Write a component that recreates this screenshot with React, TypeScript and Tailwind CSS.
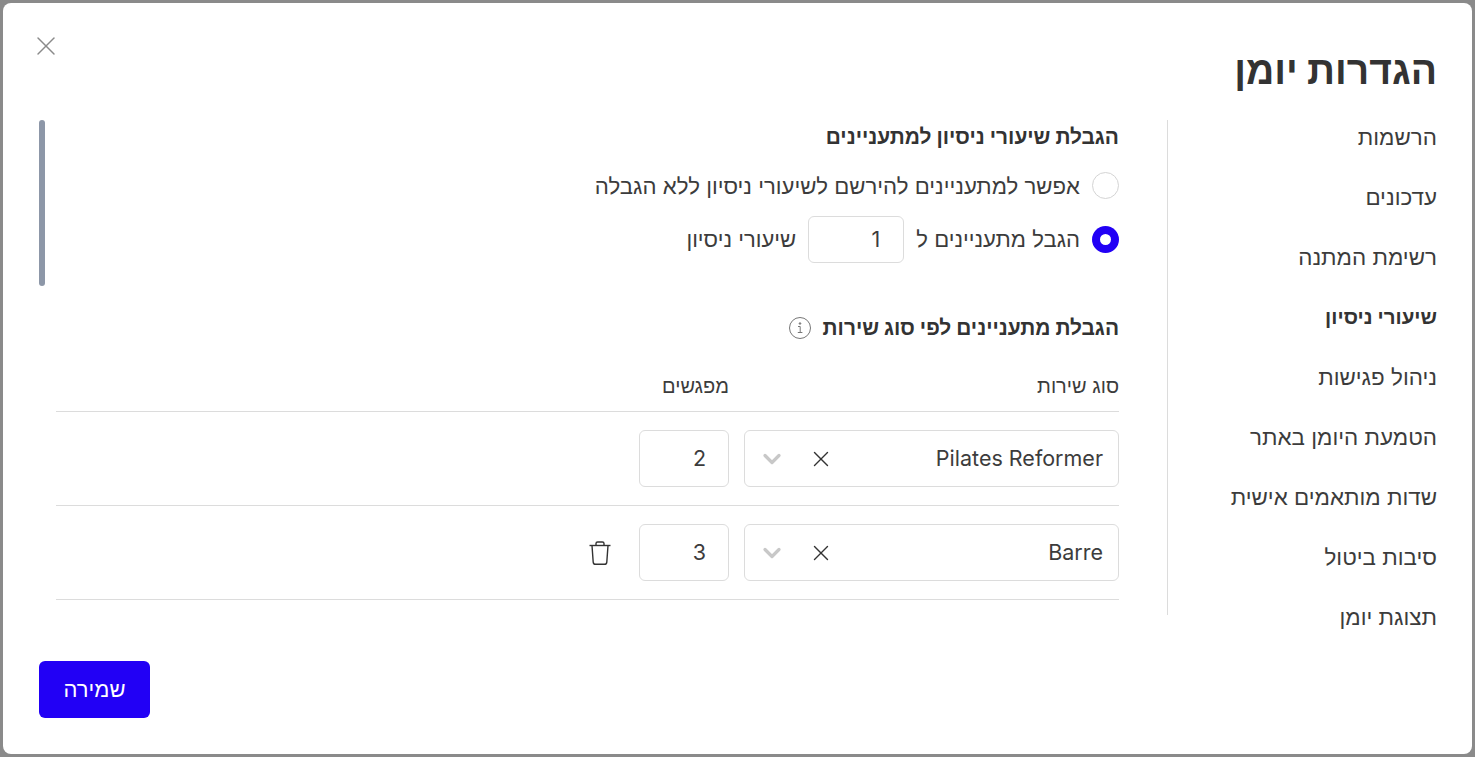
import React from "react";
import { X, ChevronDown } from "lucide-react";

const navItems = [
  "הרשמות",
  "עדכונים",
  "רשימת המתנה",
  "שיעורי ניסיון",
  "ניהול פגישות",
  "הטמעת היומן באתר",
  "שדות מותאמים אישית",
  "סיבות ביטול",
  "תצוגת יומן",
];

function ServiceRow({ name, count, removable }: { name: string; count: string; removable?: boolean }) {
  return (
    <div className="flex items-center gap-[15px] h-[94px] border-b border-[#dcdcdc]">
      <div className="w-[375px] h-[57px] flex items-center border border-[#dcdcdc] rounded-md pr-[15px] pl-[13px]">
        <span className="flex-1 text-[21.5px] text-[#3c3c3c]">{name}</span>
        <X size={26} strokeWidth={1.3} className="text-[#333333] ml-[22px]" />
        <ChevronDown size={28} strokeWidth={2.8} className="text-[#c8c8c8]" />
      </div>
      <div className="w-[90px] h-[57px] flex items-center border border-[#dcdcdc] rounded-md pr-[22px] text-[21.5px] text-[#3c3c3c]">
        {count}
      </div>
      {removable && (
        <svg width="24" height="26" viewBox="0 0 24 26" fill="none" stroke="#333333" strokeWidth="1.4" className="mr-[12px]">
          <path d="M1.5 5.5h21" />
          <path d="M8 5.5V3.6Q8 2 9.6 2h4.8Q16 2 16 3.6v1.9" />
          <path d="M4 5.5l1.2 16.6Q5.4 24.3 7.6 24.3h8.8q2.2 0 2.4-2.2L20 5.5" />
        </svg>
      )}
    </div>
  );
}

export default function App() {
  return (
    <div dir="rtl" className="h-[757px] w-[1475px] overflow-hidden bg-[#8a8a8a] p-[3px] font-['Inter','Liberation_Sans',sans-serif] text-[#3c3c3c]">
      <div className="relative flex h-full flex-col rounded-lg bg-white pr-[35px] pl-[36px]">
        <button className="absolute left-[27px] top-[27px] text-[#8a8a8a]">
          <X size={32} strokeWidth={1.1} />
        </button>

        <h1 className="mt-[43px] h-[74px] text-[39px] leading-[48px] font-bold text-[#333333]">הגדרות יומן</h1>

        <div className="flex h-[495px]">
          {/* sidebar */}
          <nav className="w-[270px] shrink-0 border-l border-[#dcdcdc] h-[495px]">
            {navItems.map((item) => (
              <div
                key={item}
                className={`h-[60px] leading-[34px] ${item === "שיעורי ניסיון" ? "text-[20.5px] font-bold text-[#333333]" : "text-[22.4px]"}`}
              >
                {item}
              </div>
            ))}
          </nav>

          {/* content */}
          <div className="relative mr-[48px] flex-1 pl-[17px]">
            <div className="absolute left-0 top-0 h-[166px] w-[6px] rounded-full bg-[#8d97a8]" />

            <h2 className="text-[20.9px] leading-[34px] font-bold text-[#333333]">הגבלת שיעורי ניסיון למתעניינים</h2>

            <label className="mt-[18px] flex h-[27px] items-center gap-[12px] text-[22.2px]">
              <span className="h-[27px] w-[27px] rounded-full border border-[#d4d4d4]" />
              אפשר למתעניינים להירשם לשיעורי ניסיון ללא הגבלה
            </label>

            <label className="mt-[17px] flex h-[47px] items-center text-[22.1px]">
              <span className="flex h-[27px] w-[27px] items-center justify-center rounded-full bg-[#2200f5]">
                <span className="h-[11px] w-[11px] rounded-full bg-white" />
              </span>
              <span className="mr-[12px]">הגבל מתעניינים ל</span>
              <span className="mr-[12px] flex h-[47px] w-[96px] items-center rounded-md border border-[#dcdcdc] pr-[23px] text-[21.5px]">1</span>
              <span className="mr-[12px]">שיעורי ניסיון</span>
            </label>

            <div className="mt-[48px] flex h-[34px] items-center gap-[11px]">
              <h2 className="text-[20.9px] leading-[34px] font-bold text-[#333333]">הגבלת מתעניינים לפי סוג שירות</h2>
              <svg width="24" height="24" viewBox="0 0 24 24" fill="none" stroke="#777777" strokeWidth="1">
                <circle cx="12" cy="12" r="10.5" />
                <path d="M10 10.5h2.2v6M9.8 16.5h4.6" />
                <circle cx="12" cy="7.5" r="0.8" fill="#777777" />
              </svg>
            </div>

            <div className="mt-[28px] flex h-[39px] gap-[15px] border-b border-[#dcdcdc] text-[20px] leading-[26px]">
              <span className="w-[375px]">סוג שירות</span>
              <span>מפגשים</span>
            </div>

            <ServiceRow name="Pilates Reformer" count="2" />
            <ServiceRow name="Barre" count="3" removable />
          </div>
        </div>

        <div className="mt-[46px] flex justify-end">
          <button className="h-[57px] w-[111px] rounded-md bg-[#2200f5] text-[22px] text-white">שמירה</button>
        </div>
      </div>
    </div>
  );
}
